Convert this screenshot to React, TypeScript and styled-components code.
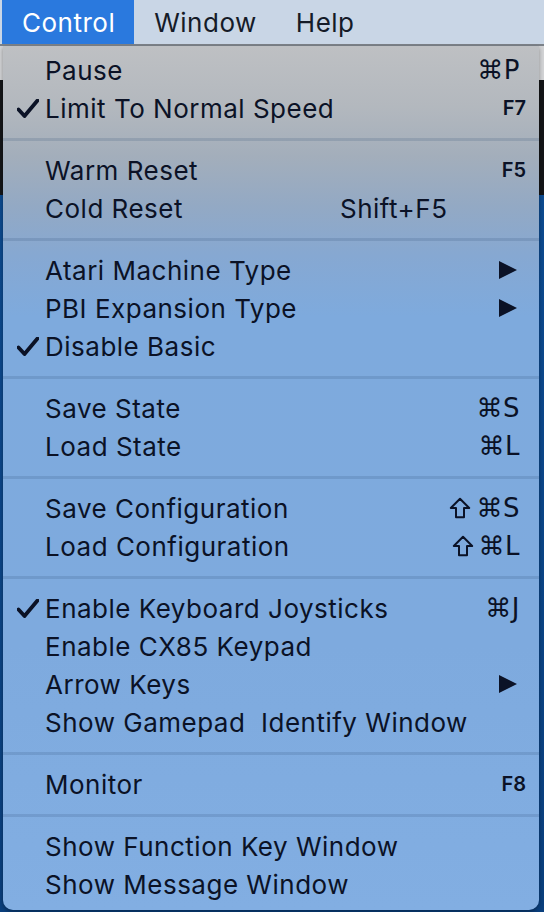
import * as React from "react";
import styled, { createGlobalStyle } from "styled-components";

const GlobalStyle = createGlobalStyle`
    html, body {
        margin: 0;
        padding: 0;
        background: #0c4a8f;
    }
    body {
        font-family: "Inter", "DejaVu Sans", sans-serif;
    }
`;

const UI_FONT = `"Inter", "DejaVu Sans", sans-serif`;
const SYMBOL_FONT = `"DejaVu Sans", "Inter", sans-serif`;
const INK = "#0b1226";

// Desktop behind the menu: a window title strip, a dark window, then the blue desktop.
const Desktop = styled.div`
    width: 544px;
    height: 912px;
    overflow: hidden;
    background: linear-gradient(
        to bottom,
        #d2d3d5 0px,
        #d2d3d5 80px,
        #141518 80px,
        #141518 195px,
        #0d4b90 195px,
        #0a3f7d 912px
    );
`;

const MenuBar = styled.div`
    display: flex;
    align-items: stretch;
    height: 44px;
    padding-left: 2px;
    background: #c9d6e6;
    border-bottom: 2px solid #7c8289;
`;

const MenuTitle = styled.div<{ active?: boolean }>`
    display: flex;
    align-items: center;
    padding: 0 19px 0 20px;
    font-family: ${UI_FONT};
    font-size: 26px;
    letter-spacing: 0.5px;
    color: ${props => props.active ? "#ffffff" : "#151b28"};
    background: ${props => props.active ? "#2a79de" : "transparent"};
`;

const Panel = styled.div`
    display: flex;
    flex-direction: column;
    width: 536px;
    margin-left: 3px;
    padding: 5px 0 7px;
    border-radius: 0 0 10px 10px;
    background: linear-gradient(
        to bottom,
        #bec0c3 0px,
        #b3b8be 60px,
        #a3aebb 110px,
        #93a9c4 160px,
        #86a8d2 210px,
        #7eaadd 270px,
        #7eaade 600px,
        #82aee2 864px
    );
    box-shadow: 0 2px 4px rgba(0, 0, 0, 0.35);
`;

const Item = styled.div`
    position: relative;
    display: flex;
    align-items: center;
    height: 38px;
    padding: 0 19px 0 42px;
    font-family: ${UI_FONT};
    font-size: 26px;
    letter-spacing: 0.5px;
    color: ${INK};
    white-space: pre;
`;

const Label = styled.span`
    flex: 1;
`;

const CheckMark = styled.svg`
    position: absolute;
    left: 14px;
    top: 10px;
`;

const Shortcut = styled.span<{ small?: boolean }>`
    display: flex;
    align-items: center;
    gap: 5px;
    font-family: ${props => props.small ? UI_FONT : SYMBOL_FONT};
    font-size: ${props => props.small ? "20px" : "26px"};
    font-weight: ${props => props.small ? 600 : 400};
    margin-right: ${props => props.small ? "-6px" : "0"};
    letter-spacing: ${props => props.small ? "0" : "0.5px"};
`;

const InlineKey = styled.span`
    position: absolute;
    left: 337px;
`;

const Separator = styled.div`
    height: 24px;
    display: flex;
    align-items: center;
    &::after {
        content: "";
        flex: 1;
        height: 3px;
        background: rgba(40, 70, 110, 0.17);
    }
`;

const Check = () => (
    <CheckMark width="22" height="19" viewBox="0 0 22 19">
        <path d="M1.5 10.5 L7.5 17 L20.5 1.5" fill="none" stroke={INK}
              strokeWidth="3.8" strokeLinecap="round" strokeLinejoin="round" />
    </CheckMark>
);

const ShiftGlyph = () => (
    <svg width="22" height="22" viewBox="0 0 22 22">
        <path d="M11 1.8 L20.2 11 L15 11 L15 20.2 L7 20.2 L7 11 L1.8 11 Z"
              fill="none" stroke={INK} strokeWidth="2" strokeLinejoin="round" />
    </svg>
);

const Arrow = () => (
    <svg width="18" height="18" viewBox="0 0 18 18" style={{ marginRight: 3 }}>
        <polygon points="0,0 18,9 0,18" fill={INK} />
    </svg>
);

interface Entry {
    label: string,
    checked?: boolean,
    key?: string,
    shift?: boolean,
    fkey?: string,
    inlineKey?: string,
    submenu?: boolean
}

const sections: Entry[][] = [
    [
        { label: "Pause", key: "⌘P" },
        { label: "Limit To Normal Speed", checked: true, fkey: "F7" },
    ],
    [
        { label: "Warm Reset", fkey: "F5" },
        { label: "Cold Reset", inlineKey: "Shift+F5" },
    ],
    [
        { label: "Atari Machine Type", submenu: true },
        { label: "PBI Expansion Type", submenu: true },
        { label: "Disable Basic", checked: true },
    ],
    [
        { label: "Save State", key: "⌘S" },
        { label: "Load State", key: "⌘L" },
    ],
    [
        { label: "Save Configuration", shift: true, key: "⌘S" },
        { label: "Load Configuration", shift: true, key: "⌘L" },
    ],
    [
        { label: "Enable Keyboard Joysticks", checked: true, key: "⌘J" },
        { label: "Enable CX85 Keypad" },
        { label: "Arrow Keys", submenu: true },
        { label: "Show Gamepad  Identify Window" },
    ],
    [
        { label: "Monitor", fkey: "F8" },
    ],
    [
        { label: "Show Function Key Window" },
        { label: "Show Message Window" },
    ],
];

const MenuItem = ({ entry }: { entry: Entry }) => (
    <Item>
        {entry.checked ? <Check /> : null}
        <Label>{entry.label}</Label>
        {entry.inlineKey ? <InlineKey>{entry.inlineKey}</InlineKey> : null}
        {entry.key ? (
            <Shortcut>
                {entry.shift ? <ShiftGlyph /> : null}
                <span>{entry.key}</span>
            </Shortcut>
        ) : null}
        {entry.fkey ? <Shortcut small>{entry.fkey}</Shortcut> : null}
        {entry.submenu ? <Arrow /> : null}
    </Item>
);

const App = () => (
    <Desktop>
        <GlobalStyle />
        <MenuBar>
            <MenuTitle active>Control</MenuTitle>
            <MenuTitle>Window</MenuTitle>
            <MenuTitle>Help</MenuTitle>
        </MenuBar>
        <Panel>
            {sections.map((section, i) => (
                <React.Fragment key={i}>
                    {i > 0 ? <Separator /> : null}
                    {section.map(entry => <MenuItem key={entry.label} entry={entry} />)}
                </React.Fragment>
            ))}
        </Panel>
    </Desktop>
);

export default App;
